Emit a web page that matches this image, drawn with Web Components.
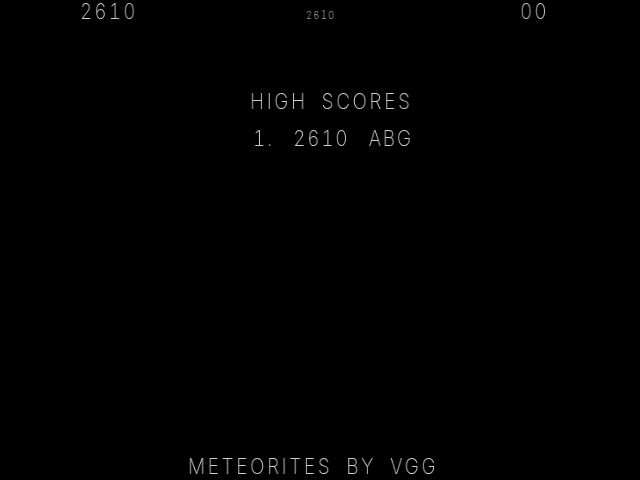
<!DOCTYPE html>
<html>
<head>
<meta charset="utf-8">
<title>Meteorites</title>
<style>
html, body { margin: 0; background: #000; }
</style>
</head>
<body>
<template id="vec-text-template">
<style>
:host {
    display: block;
    width: var(--w);
    height: var(--h, 16px);
    line-height: var(--h, 16px);
    font-family: Inter, "Liberation Sans", sans-serif;
    font-weight: 200;
    font-size: var(--size, 22px);
    font-variant-numeric: tabular-nums;
    letter-spacing: var(--track, 3.2px);
    word-spacing: var(--word, 7px);
    color: #cfcfcf;
}
span {
    display: inline-block;
    white-space: pre;
    transform: scaleX(var(--sx, 0.86));
    transform-origin: 0 50%;
    will-change: transform;
}
</style>
<span><slot></slot></span>
</template>

<template id="attract-screen-template">
<style>
:host {
    display: flex;
    flex-direction: column;
    width: 640px;
    height: 480px;
    box-sizing: border-box;
    background: #000;
    overflow: hidden;
}
#scores {
    display: flex;
    align-items: flex-end;
    padding: 3px 0 0 80px;
    height: 16px;
}
#top { --w: 226px; --track: 2.5px; }
#best { --w: 214px; --size: 11px; --h: 8px; --track: 1.5px; }
#lives { --w: 40px; --track: 2.5px; }
#table {
    display: flex;
    flex-direction: column;
    gap: 21px;
    padding: 74px 0 0 250px;
}
#rank { margin-left: 3px; --word: 14px; --track: 2.2px; }
#credit { margin: auto 0 6px 188px; }
</style>
<div id="scores">
    <vec-text id="top">2610</vec-text>
    <vec-text id="best">2610</vec-text>
    <vec-text id="lives">00</vec-text>
</div>
<div id="table">
    <vec-text>HIGH SCORES</vec-text>
    <vec-text id="rank">1. 2610 ABG</vec-text>
</div>
<vec-text id="credit">METEORITES BY VGG</vec-text>
</template>

<attract-screen></attract-screen>

<script>
(function() {
    class VecText extends HTMLElement {
        constructor() {
            super();
            this.attachShadow({ mode: 'open' });
            const template = document.getElementById('vec-text-template');
            this.shadowRoot.appendChild(template.content.cloneNode(true));
        }
    }

    class AttractScreen extends HTMLElement {
        constructor() {
            super();
            this.attachShadow({ mode: 'open' });
            const template = document.getElementById('attract-screen-template');
            this.shadowRoot.appendChild(template.content.cloneNode(true));
        }
    }

    window.customElements.define('vec-text', VecText);
    window.customElements.define('attract-screen', AttractScreen);
})();
</script>
</body>
</html>
